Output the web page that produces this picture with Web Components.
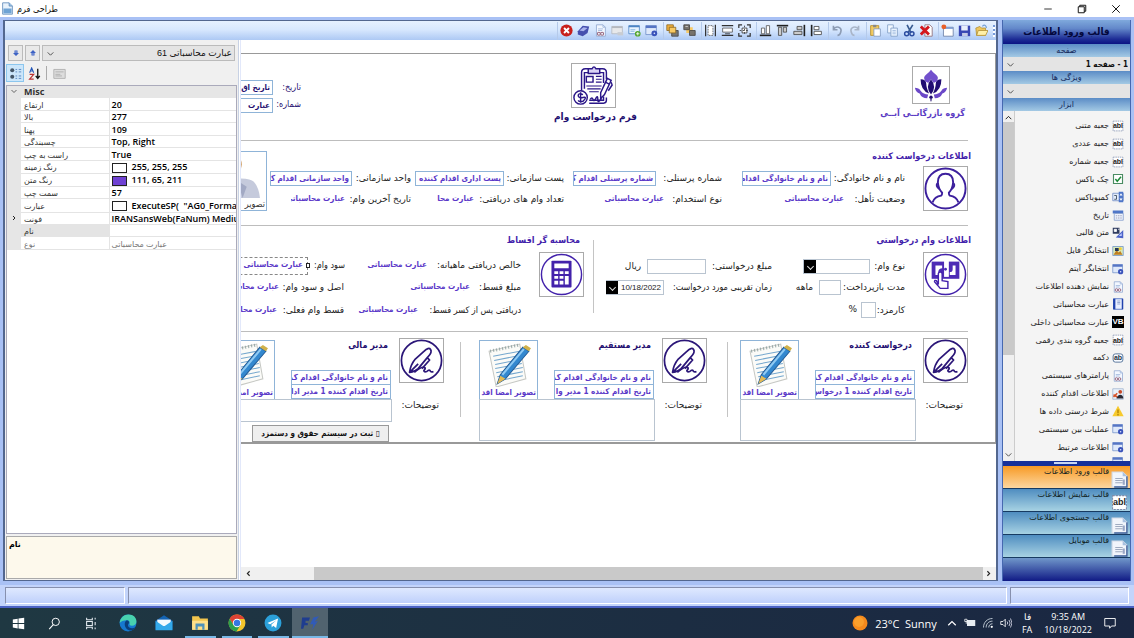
<!DOCTYPE html>
<html lang="fa">
<head>
<meta charset="utf-8">
<title>طراحی فرم</title>
<style>
html,body{height:100%;margin:0}
body{font-family:"Noto Sans","DejaVu Sans",sans-serif;font-size:9px;color:#111}
</style>
</head>
<body>
<designer-window></designer-window>
<script>
const ICONS = {
  doc: '<path d="M2 1h8l4 4v10H2z" fill="#e8f2fb" stroke="#5c88b8"/><path d="M10 1v4h4" fill="#9ec4e6" stroke="#5c88b8"/><path d="M3 8h10v6H3z" fill="#6ea3d4"/>',
  up: '<path d="M8 2l6 6h-3v5H5V8H2z" fill="#3d62c4"/><path d="M6 10h4" stroke="#fff"/>',
  down: '<path d="M8 14l6-6h-3V3H5v5H2z" fill="#3d62c4"/><path d="M6 6h4" stroke="#fff"/>',
  chevron: '<path d="M3 6l5 5 5-5" fill="none" stroke="#444" stroke-width="1.6"/>',
  chevronup: '<path d="M3 11l5-5 5 5" fill="none" stroke="currentColor" stroke-width="1.6"/>',
  left: '<path d="M10 4L6 8l4 4" fill="none" stroke="#222" stroke-width="2"/>',
  right: '<path d="M6 4l4 4-4 4" fill="none" stroke="#222" stroke-width="2"/>',
  cats: '<circle cx="4" cy="4" r="2.5" fill="#456"/><circle cx="4" cy="12" r="2.5" fill="#456"/><path d="M8 3h2m2 0h3M8 6h2m2 0h3M8 11h2m2 0h3M8 14h2m2 0h3" stroke="#4b78b5"/>',
  sort: '<path d="M2 7l2.500-6L7 7M3 5h3" fill="none" stroke="#2456b8" stroke-width="1.300"/><path d="M2 9h5l-5 6h5" fill="none" stroke="#b33" stroke-width="1.500"/><path d="M12 2v12M9.500 11l2.500 3 2.500-3" fill="none" stroke="#111" stroke-width="1.600"/>',
  page: '<path d="M1 3h14v11H1z" fill="#ddd" stroke="#aaa"/><path d="M3 6h10M3 9h6M3 11h8" stroke="#aaa"/>',
  close: '<circle cx="8" cy="8" r="7.500" fill="#c8201c"/><path d="M5 5l6 6m0-6l-6 6" stroke="#fff" stroke-width="2.400"/>',
  cube: '<path d="M1 9l6-7 8 1-2 8-6 4-6-2z" fill="#4650ae"/><path d="M3 8l5-4 5 1-5 4z" fill="#aab3ec"/>',
  docview: '<path d="M3 1h8l3 3v11H3z" fill="#f2f7ff" stroke="#8fa6cf"/><path d="M11 1v3h3M5 6h6M5 8h5" fill="none" stroke="#9cb4da"/><circle cx="6" cy="12" r="1.800" fill="none" stroke="#9a6a80" stroke-width="1.300"/><circle cx="10" cy="12" r="1.800" fill="none" stroke="#9a6a80" stroke-width="1.300"/>',
  greyform: '<path d="M1 3h13v9H1z" fill="#e7e8ea" stroke="#b4b8bf"/><path d="M1 4h13" stroke="#b4b8bf" stroke-width="2"/><path d="M8 10h7v4H8z" fill="#c8ccd2"/>',
  addform: '<path d="M1 2h13v10H1z" fill="#e9f4ff" stroke="#4c84c4"/><path d="M1 3h13" stroke="#4c84c4" stroke-width="2"/><path d="M3 7h6M3 9h5" stroke="#7eb0dd"/><circle cx="12" cy="12" r="3.500" fill="#55a630"/><path d="M12 10v4m-2-2h4" stroke="#fff"/>',
  form: '<path d="M1 2h13v11H1z" fill="#dfe9fa" stroke="#6f8fca"/><path d="M1 3.500h13" stroke="#5675c4" stroke-width="3"/><circle cx="11.500" cy="11.500" r="3.500" fill="#3a53ba"/><circle cx="11.500" cy="11.500" r="1" fill="#dfe6ff"/>',
  front: '<path d="M1 1h8v7H1z" fill="#f0b13b" stroke="#8c6821"/><path d="M7 8h8v7H7z" fill="#777" stroke="#444"/><path d="M4 4h8v7H4z" fill="#f7c964" stroke="#8c6821"/>',
  back: '<path d="M4 4h8v7H4z" fill="#f7c964"/><path d="M1 1h7v6H1zM8 8h7v6H8z" fill="#77736c" stroke="#444"/><path d="M3 3h3" stroke="#ddd"/>',
  sizeh: '<path d="M2 1v14M14 1v14" stroke="#333" stroke-width="1.500"/><path d="M5 2h6v12H5z" fill="#fff" stroke="#555" stroke-dasharray="2 1"/>',
  sizev: '<path d="M1 2h14M1 14h14" stroke="#333" stroke-width="1.500"/><path d="M2 5h12v5H2z" fill="#fff" stroke="#555"/><path d="M5 12h6" stroke="#333"/>',
  sizeb: '<path d="M1 5V1h4m6 0h4v4m0 6v4h-4m-6 0H1v-4" fill="none" stroke="#333" stroke-width="1.500"/><path d="M5 5h6v6H5z" fill="#fff" stroke="#333"/><path d="M8 2v12M2 8h12" stroke="#333" stroke-dasharray="2 2"/>',
  alignb: '<path d="M1 14h14" stroke="#222" stroke-width="2"/><path d="M3 5h4v7H3zM9 2h4v10H9z" fill="#fff" stroke="#555"/>',
  alignt: '<path d="M1 2h14" stroke="#222" stroke-width="2"/><path d="M3 4h4v10H3zM9 4h4v6H9z" fill="#ccc" stroke="#444"/>',
  alignr: '<path d="M14 1v14" stroke="#222" stroke-width="2"/><path d="M5 3h6v4H5zM1 9h10v4H1z" fill="#ccc" stroke="#444"/>',
  alignl: '<path d="M2 1v14" stroke="#222" stroke-width="2"/><path d="M5 3h6v4H5zM5 9h9v4H5z" fill="#fff" stroke="#444"/>',
  undo: '<path d="M3 2v5h5M3 7c3-6 11-3 9 3-.5 2-2 4-4 4" fill="none" stroke="#8d9cb4" stroke-width="2"/>',
  redo: '<path d="M13 2v5H8m5 0C10 1 2 4 4 10c.5 2 2 4 4 4" fill="none" stroke="#a9b5c8" stroke-width="2"/>',
  paste: '<path d="M2 2h10v12H2z" fill="#f3cb61" stroke="#b58d2b"/><path d="M5 1h4v3H5z" fill="#888"/><path d="M6 6h8v9H6z" fill="#fff" stroke="#7f97bf"/>',
  copy: '<path d="M2 1h7v10H2z" fill="#f2f8ff" stroke="#7f9cc4"/><path d="M6 5h8v10H6z" fill="#eaf4ff" stroke="#7f9cc4"/><path d="M8 8h4m-4 2h4m-4 2h4" stroke="#9cb7dc"/>',
  cut: '<path d="M12 1L6 11M5 1l5 10" stroke="#375a90" stroke-width="2"/><circle cx="4.500" cy="12" r="2.500" fill="none" stroke="#2b4ca0" stroke-width="1.800"/><circle cx="11" cy="12" r="2.500" fill="none" stroke="#2b4ca0" stroke-width="1.800"/>',
  remove: '<path d="M6 1h6l3 3v11H6z" fill="#fff" stroke="#8c6a74"/><path d="M1 3l10 10M11 3L1 13" stroke="#d4161c" stroke-width="3.500"/>',
  newform: '<path d="M3 4h12v11H3z" fill="#fff" stroke="#677ca5"/><path d="M3 5h12" stroke="#7b9bd0" stroke-width="2"/><circle cx="3.500" cy="3.500" r="3" fill="#e8602a"/>',
  save: '<path d="M1 2h14v13H1z" fill="#3846b2"/><path d="M4 2h8v6H4z" fill="#e8eefb"/><path d="M5 11h7v4H5z" fill="#c4cbe6"/>',
  open: '<path d="M1 5l5-2 2 2h5v9H2z" fill="#eec65c" stroke="#b29137"/><path d="M4 8h12l-3 6H2z" fill="#fff0a8" stroke="#b29137"/><path d="M9 3c3-3 5-1 5 2" fill="none" stroke="#74a0d6" stroke-width="1.500"/>',
  abl: '<path d="M1.500 1.500h13v13h-13z" fill="#fff" stroke="#7d8cab" stroke-dasharray="2 1"/>',
  check: '<path d="M2 2h12v12H2z" fill="#fff" stroke="#4a8c62" stroke-width="1.500"/><path d="M4.500 8l2.500 3 5-6" fill="none" stroke="#1f8a38" stroke-width="2"/>',
  combo: '<path d="M1 3h14v10H1z" fill="#e2ebfa" stroke="#6a86c0"/><path d="M9 1h6v14H9z" fill="#4f76c8"/><path d="M10 6l2-3 2 3zm0 4l2 3 2-3z" fill="#fff"/><path d="M3 6h3v5H3" fill="none" stroke="#234"/>',
  date: '<path d="M1 2h14v4H1z" fill="#4f76c8"/><path d="M3 6h12v9H3z" fill="#eef3fc" stroke="#7c95c8"/><path d="M5 9h8M5 12h8" stroke="#88a" stroke-dasharray="2 1"/>',
  template: '<path d="M1 1h9v8H1z" fill="#303c60"/><path d="M3 3h3v3H3zM8 3h2" fill="#fff" stroke="#fff"/><path d="M5 14L15 4v11z" fill="#4c63c8"/><path d="M9 12h4V8z" fill="#bac8ff"/>',
  picture: '<path d="M1 2h14v12H1z" fill="#d9e9b8" stroke="#6c90c7"/><path d="M2 13l4-6 3 3 2-2 3 5z" fill="#c07f21"/><path d="M4 4h5v4H4z" fill="#253858"/><circle cx="11" cy="5" r="2" fill="#f5cf32"/>',
  book: '<path d="M2 1h12v14H2z" fill="#eaf0ff" stroke="#2f55ba"/><path d="M3 1v14" stroke="#2143ad" stroke-width="3"/><path d="M14 1v14" stroke="#2143ad" stroke-width="2"/><path d="M7 4h4M7 6h4M7 8h4" stroke="#7d94c4"/>',
  vb: '<path d="M0 0h16v16H0z" fill="#000"/>',
  ab: '<rect x="1.500" y="2.500" width="13" height="11" rx="3" fill="#f8fbff" stroke="#4e6d94" stroke-width="1.200"/>',
  sign: '<path d="M1 1h14v14H1z" fill="#eaf2fb" stroke="#9db0ce"/><circle cx="11" cy="5" r="2.500" fill="#c84a28"/><path d="M6 14c1-6 9-7 9 0z" fill="#2a2a35"/><path d="M2 9l5 3M2 12l5-5" stroke="#d85228" stroke-width="2"/>',
  warn: '<path d="M8 1l7.500 14H.5z" fill="#f7ca2d"/><path d="M8 6v5m0 1v2" stroke="#a97a00" stroke-width="1.600"/>',
  sheet: '<path d="M1 1h10l4 4v10H1z" fill="#f1f5fb" stroke="#d2dae6"/><path d="M15 5v10H3" fill="none" stroke="#3d5f99" stroke-width="1.300"/><path d="M11 1v4h4" fill="#a7c0df"/><path d="M4 7h7M4 9h7M4 11h7" stroke="#9fabc0"/><path d="M11 8h2v5h-2z" fill="#98a6c4"/>',
  min: '<path d="M3 8h10" stroke="#222" stroke-width="1.200"/>',
  max: '<path d="M3 5h8v8H3zM5 5V3h8v8h-2" fill="none" stroke="#111" stroke-width="1.300"/>',
  x: '<path d="M3 3l10 10m0-10L3 13" stroke="#111" stroke-width="1.300"/>',
  win: '<path d="M1 3l6-1v5.500H1zM8 1.800L15 1v6.500H8zM1 8.500h6V14l-6-1zM8 8.500h7V15l-7-.9z" fill="#fff"/>',
  search: '<circle cx="9.500" cy="6" r="4.500" fill="none" stroke="#fff" stroke-width="1.200"/><path d="M6.500 9.500L1.500 15" stroke="#fff" stroke-width="1.300"/>',
  task: '<path d="M2 1v2.500h7V1M2 15v-2.500h7V15M2 5.500h7v5H2zM12.500 1v2m0 3v4m0 3v2" fill="none" stroke="#e4eaf0" stroke-width="1.300"/>',
  edge: '<circle cx="8" cy="8" r="7.500" fill="#1678cf"/><path d="M.6 8C1 3.500 4.500.5 8.500.5c4.500 0 7 3 7 6 0 2.500-1.500 4-4 4-2 0-2.500-1-2-2 .5-1.500-.5-3-2.500-3C4 5.500 1.500 6.500.6 8z" fill="#48d1ae"/><path d="M7 5.500C4 7 4.500 13 9 14.500c2 .6 4.500-.5 5.500-2.500-3 1.500-6 .5-6.500-1.500-.3-1.500 1-2 .9-3.200C8.700 6 8 5.600 7 5.500z" fill="#0a3f7c"/>',
  mail: '<path d="M.5 6L8 1l7.500 5v8H.5z" fill="#1464b4"/><path d="M2 5h12v6H2z" fill="#f3fafe"/><path d="M.5 6L8 11l7.500-5v8.500H.5z" fill="#33a9ea"/>',
  folder: '<path d="M1 2h6l1 2h7v10H1z" fill="#f4c64e"/><path d="M1 6h14v8H1z" fill="#ffe08a"/><path d="M4 8.500h8V14h-2v-3H6v3H4z" fill="#4f92ba"/>',
  chrome: '<circle cx="8" cy="8" r="7.500" fill="#f4c62c"/><path d="M8 .5A7.500 7.500 0 0 0 1.500 4.200L5 10l3-5.500h6.600A7.500 7.500 0 0 0 8 .5z" fill="#de4234"/><path d="M1.500 4.200A7.500 7.500 0 0 0 7.500 15.500L11 10H5z" fill="#2d9f4c"/><circle cx="8" cy="8" r="3.700" fill="#fff"/><circle cx="8" cy="8" r="2.900" fill="#3577e0"/>',
  telegram: '<circle cx="8" cy="8" r="7.500" fill="#2ba0da"/><path d="M3 8l9.500-4-1.700 8.500-2.600-2-1.300 1.400-.3-2.500L11 5.500 5.500 9z" fill="#fff"/>',
  app: '<path d="M1 3h7L7 6H4v2h2v2H3l-1 3H0z" fill="#1f3d8f"/><path d="M11 3l5-1-4 5 3-1-5 8 1-5H8z" fill="#315bb8"/>',
  sun: '<circle cx="8" cy="8" r="7.500" fill="#f58a1d"/><circle cx="7" cy="7" r="5" fill="#fa9f2c"/>',
  battery: '<path d="M4 4h11v8H4z" fill="#e7edf2"/><path d="M1 3h3v3H1zM3 6v3" fill="none" stroke="#fff"/>',
  wifi: '<path d="M2 14C2 7 7 2 14 2M5.500 14c0-5 3.500-8.500 8.500-8.500M9 14c0-3 2-5 5-5" fill="none" stroke="#c7d1db" stroke-width="1.200"/><circle cx="13" cy="13" r="1.500" fill="#fff"/>',
  sound: '<path d="M1 6h3l3-3v10l-3-3H1z" fill="none" stroke="#fff" stroke-width="1.100"/><path d="M9.500 6q1.500 2 0 4m2.500-6q3 4 0 8m2-10q4 6 0 12" fill="none" stroke="#dde" stroke-width="1.100"/>',
  note: '<path d="M1 2h14v10h-5l-2.500 3V12H1z" fill="none" stroke="#fff" stroke-width="1.200"/>',
  loanform: '<g fill="none" stroke="#2b1788" stroke-width="1.500"><path d="M17 5h-3q-4 0-4 4v19M29 5h3q4 0 4 4v7m0 19v3q0 3-3 3H18"/><path d="M17 9h-4v17m16-17h4v11m0 14v4H18"/><path d="M17 9V5h4q2-4 4 0h4v5H17z" fill="#d9d2f5"/><path d="M15 13h7v6h-7z"/><path d="M25 13h6m-6 3h6m-6 3h6M15 23h16M16 26h14M18 29h10" stroke-width="1.200"/><path d="M37 15l4 2-7 15-4 4v-6z" fill="#fff"/><path d="M35 19l4 2M41 19l1 3-4 6"/><path d="M19 37q2-3 3 0t3-1 2 1 4-1"/><circle cx="9" cy="35" r="7" fill="#fff"/></g><path d="M11.500 32q-5-2-5 1t5 2 0 4q-4 1-5-1M9 29.500v11" fill="none" stroke="#2b1788" stroke-width="1.500"/>',
  lotus: '<g transform="scale(1.184)"><path d="M19 3q2 3 5 5 4 3 1 7l-3 2-3-4-3 4-3-2q-3-4 1-7 3-2 5-5z" fill="#7250cd"/><path d="M19 13q6.500 8 0 16-6.500-8 0-16z" fill="#210d72"/><path d="M8 13q6 0 6 5 0 4 3 10-9-3-9-15zM30 13q-6 0-6 5 0 4-3 10 9-3 9-15z" fill="#210d72"/><path d="M2 22q4 0 6 3 3 4 8 4l-1 4q-6 0-8-5-4-1-5-6zM36 22q-4 0-6 3-3 4-8 4l1 4q6 0 8-5 4-1 5-6z" fill="#6b48c8"/><circle cx="19" cy="32" r="1.800" fill="#210d72"/><path d="M18 34h2l-1 3z" fill="#210d72"/></g>',
  person: '<g fill="none" stroke="#3c1f9d" stroke-width="2"><circle cx="22.500" cy="22.500" r="21"/><path d="M9 37q2-6 9-7 1-1 1-3-4-4-4.500-11 0-9 8-9t8 9q-.5 7-4.500 11 0 2 1 3 7 1 9 7"/><path d="M14 17q-2 3 2 6m15-6q2 3-2 6"/></g>',
  money: '<circle cx="22.500" cy="22.500" r="21" fill="none" stroke="#4322ab" stroke-width="1.600"/><path d="M8 9h29v18H8z" fill="#4d2bb5"/><path d="M12 13h7v3q-3 0-4 3v4h-3zM30 13h3v10h-6v-3q3 0 3-3z" fill="#fff"/><path d="M21 7h5v18h-5z" fill="#fff"/><circle cx="22.500" cy="17" r="1.500" fill="#4d2bb5"/><path d="M15 33V22q0-2 2-2t2 2v7l6 1v7h-8l-6-7q0-2 2-1z" fill="#fff" stroke="#4322ab" stroke-width="1.500"/>',
  calc: '<circle cx="22.500" cy="22.500" r="21" fill="none" stroke="#4322ab" stroke-width="1.500"/><rect x="12" y="8" width="21" height="28" rx="1" fill="#4322ab"/><path d="M15 11h15v5H15zM15 19h4v3h-4zm5.500 0h4v3h-4zm5.500 0h4v3h-4zM15 24h4v3h-4zm5.500 0h4v3h-4zm5.500 0h4v9h-4zM15 29h4v4h-4zm5.500 0h4v4h-4z" fill="#fff"/>',
  pen: '<g fill="none" stroke="#2b1678" stroke-width="1.800"><circle cx="22.500" cy="22.500" r="21"/><path d="M10 35q1-8 6-14l9-8q5-5 7-2t-3 8L19 31q-3 3-9 4zm0 0l9-9m9-7l3 3-8 9" stroke-linejoin="round"/><path d="M15 35q8-7 11-5 1 1-1 3 0 2 3 1 3-3 4 0 1 1 3 0"/></g>',
  notepad: '<path d="M3 10L33 3l6 34-29 8z" fill="#fbfbf8" stroke="#c6c8c4"/><path d="M4 10L32 4" stroke="#9aa" stroke-width="3" stroke-dasharray="1 2"/><path d="M7 15l26-5M8 19l26-5M9 23l25-5M9 27l26-5M10 31l26-5M11 35l25-5M12 39l24-5" stroke="#74a7ce"/><path d="M11 42l3-9L36 6l6 4-23 27z" fill="#3388cf" stroke="#225b96"/><path d="M16 33L37 8" stroke="#8fcaf3" stroke-width="2"/><path d="M11 42l3-8 5 3z" fill="#e4ba54"/><path d="M36 6l3-2 5 3-2 3z" fill="#d0b14a"/>',
  portrait: '<ellipse cx="17" cy="12" rx="9" ry="11" fill="#b97320"/><ellipse cx="15" cy="14" rx="7" ry="9" fill="#efc39a"/><path d="M2 45q1-18 14-19 18-1 22 3 5 6 6 16z" fill="#c5cadc"/><path d="M22 28l9 6-4 11" fill="#a2a9c4"/>'
};
const BIG = new Set(['loanform','lotus','person','money','calc','pen','notepad','portrait']);
const GLYPHS = {abl:['abl','7px','#222'], vb:['VB','8px','#fff'], ab:['ab','7px','#234']};

class UiIcon extends HTMLElement {
  connectedCallback() {
    if (this.shadowRoot) return;
    const n = this.getAttribute('name'), v = BIG.has(n) ? 45 : 16, g = GLYPHS[n];
    this.attachShadow({mode:'open'}).innerHTML = `<style>
      :host{display:inline-grid;width:var(--size,13px);height:var(--size,13px);flex:none}
      svg,b{grid-area:1/1}svg{width:100%;height:100%;display:block}
      b{place-self:center;font:700 8px/1 "Liberation Sans",sans-serif}</style>
      <svg viewBox="0 0 ${v} ${v}" aria-hidden="true">${ICONS[n]}</svg>${g ? `<b style="font-size:var(--glyph,${g[1]});color:${g[2]}">${g[0]}</b>` : ''}`;
  }
}
customElements.define('ui-icon', UiIcon);

function component(name, html) {
  const t = document.createElement('template');
  t.innerHTML = html;
  customElements.define(name, class extends HTMLElement {
    constructor() { super(); this.attachShadow({mode:'open'}).append(t.content.cloneNode(true)); }
  });
}

component('title-bar', `<style>
  :host{display:flex;align-items:center;height:17px;background:#fff;padding:0 12px 0 1px;gap:3px;font:9px/16px "DejaVu Sans Condensed","DejaVu Sans",sans-serif}
  h1{font:inherit;margin:0;flex:1}
  nav{display:flex;gap:22px}button{all:unset;display:flex;--size:12px}
</style><ui-icon name="doc"></ui-icon><h1>طراحی فرم</h1>
<nav><button aria-label="کوچک"><ui-icon name="min"></ui-icon></button><button aria-label="بزرگ"><ui-icon name="max"></ui-icon></button><button aria-label="بستن"><ui-icon name="x"></ui-icon></button></nav>`);

const groups = [['close','cube','docview','greyform','addform','form'],['front','back'],['sizeh','sizev','sizeb'],['alignb','alignt','alignr','alignl'],['undo','redo'],['paste','copy','cut','remove'],['newform','save','open']];
component('tool-strip', `<style>
  :host{display:flex;justify-content:flex-end;align-items:center;gap:3px;height:19px;background:linear-gradient(#e6f1ff,#d8e8fe 45%,#adc9f4)}
  div{display:flex;border-left:1px solid #b5caea}div:first-child{border:0}
  button{all:unset;display:grid;place-items:center;width:17px;height:18px}
  i{width:2px;height:12px;background:repeating-linear-gradient(#7699d8 0 2px,#fff 2px 4px);margin-right:1px}
</style>${groups.map(g => `<div>${g.map(i => `<button aria-label="${i}"><ui-icon name="${i}"></ui-icon></button>`).join('')}</div>`).join('')}<i></i>`);

component('drop-down', `<style>
  :host{display:grid;height:14px;background:#e4e4e4;direction:ltr}
  ::slotted(select){grid-area:1/1;appearance:none;border:0;background:none;width:100%;min-width:0;height:100%;padding:0 2px;margin:0;direction:rtl;font:inherit;color:#111}
  ui-icon{grid-area:1/1;--size:9px;align-self:center;margin-left:3px}
</style><ui-icon name="chevron"></ui-icon><slot></slot>`);

const rows = [['ارتفاع','20'],['بالا','277'],['پهنا','109'],['چسبندگی','Top, Right'],['راست به چپ','True'],['رنگ زمینه','255, 255, 255','#fff'],['رنگ متن','111, 65, 211','#6f41d3'],['سمت چپ','57'],['عبارت','ExecuteSP(&nbsp; "AG0_Format','#fff'],['فونت','IRANSansWeb(FaNum) Medium','','>'],['نام',''],['نوع','عبارت محاسباتی']];
component('property-panel', `<style>
  :host{display:flex;flex-direction:column;background:#f0f0f0;padding:5px 1px 1px 1px;box-sizing:border-box;gap:2px;border-right:1px solid #c8d2e4}
  .pick{display:flex;gap:2px;height:16px;padding:0 2px}
  button{all:unset;box-sizing:border-box;display:grid;place-items:center;width:15px;border:1px solid #bbb;background:#e9e9e9;--size:8px}
  drop-down{flex:1;height:16px;box-sizing:border-box;border:1px solid #bbb;font:9px "Liberation Sans","DejaVu Sans",sans-serif}
  .tools{display:flex;gap:3px;height:20px;align-items:center;padding-left:1px}
  .tools button{border:0;background:none;width:16px;height:16px;--size:13px}.tools .on{background:#cce6fa;outline:1px solid #8cc6ee}
  .tools i{width:1px;height:14px;background:#aaa;margin:0 1px}
  .grid{flex:1;background:#fff;border:1px solid #aab;overflow:hidden;min-height:0}
  table{border-collapse:collapse;table-layout:fixed;width:100%;height:164px}
  td,th{padding:0 0 0 3px;height:11px;line-height:11px;overflow:hidden;white-space:nowrap;text-align:left;border-bottom:1px solid #e4e4e4;vertical-align:middle;font-weight:400}
  th{font-size:8px;border-right:1px solid #e4e4e4;color:#333}td{font:600 9px/11px "Open Sans","DejaVu Sans",sans-serif;color:#000;padding-left:2px}
  td.g,.h td,.h th{background:#e6e6e6;border-color:#e6e6e6}.h th{font-size:9px;font-weight:700}
  td.g{padding:0;text-align:center;--size:8px}
  .sel th{background:#e4e4e4}.dim *{color:#777;font-weight:400;font-size:8px}
  span{display:inline-block;box-sizing:border-box;width:15px;height:10px;border:1px solid #222;vertical-align:middle;margin-right:5px}
  .help{height:41px;background:#fdf9ec;border:1px solid #aaa;font-size:8px;line-height:14px;font-weight:700;padding:0 2px;color:#000}
</style>
<div class="pick"><button aria-label="پایین"><ui-icon name="down"></ui-icon></button><button aria-label="بالا"><ui-icon name="up"></ui-icon></button><drop-down><select aria-label="کنترل"><option>عبارت محاسباتی 61</option></select></drop-down></div>
<div class="tools"><button class="on" aria-label="دسته"><ui-icon name="cats"></ui-icon></button><button aria-label="الفبا"><ui-icon name="sort"></ui-icon></button><i></i><button aria-label="صفحه"><ui-icon name="page"></ui-icon></button></div>
<div class="grid"><table><colgroup><col style="width:14px"><col style="width:88px"><col></colgroup>
<tr class="h"><td class="g"><ui-icon name="chevron"></ui-icon></td><th colspan="2">Misc</th></tr>
${rows.map((r,i) => `<tr class="${i==10?'sel':i==11?'dim':''}"><td class="g">${r[3]?'<ui-icon name="right"></ui-icon>':''}</td><th scope="row">${r[0]}</th><td>${r[2]?`<span style="background:${r[2]}"></span>`:''}${r[1]}</td></tr>`).join('')}
</table></div><div class="help">نام</div>`);

/* Every control on the design surface keeps its own place, anchored top-right:
   r = distance from the right edge, t = distance from the top. */
const at = (r,t,w,h) => `right:${r}px;top:${t}px;${w?`width:${w}px;`:''}${h?`height:${h}px;`:''}`;
const W = 995, T = 54;
const label = (x,y,s,c='') => `<span class="l ${c}" style="${at(W-x,y-T-8)}">${s}</span>`;
const field = (x1,x2,y,s,c='') => `<span class="f ${c}" style="${at(W-x2,y-T,x2-x1,15)}">${s}</span>`;
const pic = (x,y,n,s=45) => `<span class="p" style="${at(W-x-s,y-T)}--size:${s-2}px"><ui-icon name="${n}"></ui-icon></span>`;
const vline = (x,y,h) => `<i class="v" style="${at(W-x,y-T,1,h)}"></i>`;
const hline = y => `<i class="h" style="top:${y-T}px"></i>`;
const calc = 'عبارت محاسباتی';
const approve = (x,head,last,h) => label(x-11,345,head,'head navy') + pic(x,338,'pen') +
  `<figure style="${at(W-x+124,340-T,59,60)}"><ui-icon name="notepad"></ui-icon><figcaption>تصویر امضا اقد</figcaption></figure>` +
  field(x-108,x-8,370,'نام و نام خانوادگی اقدام ک') + field(x-108,x-8,384,'تاریخ اقدام کننده 1 '+last) +
  `<label class="l" for="n${x}" style="${at(W-x-40,397-T)}">توضیحات:</label><textarea id="n${x}" style="${at(W-x+7,399-T,176,h)}"></textarea>`;
component('form-surface', `<style>
  :host{display:block;position:relative;height:391px;box-sizing:border-box;border:solid #999;border-width:1px 1px 2px 0;background:#fff;direction:rtl;font:9px/16px "DejaVu Sans",sans-serif;color:#222;--narrow:"DejaVu Sans Condensed","DejaVu Sans",sans-serif}
  .l,.f,.p,.v,.h,figure,textarea,input,select,button,.arrow,.pick,.handle{position:absolute;box-sizing:border-box;margin:0}
  .l{white-space:nowrap}
  .n{font-family:var(--narrow)}
  .c,.f,figcaption{color:#5a38c8;font-weight:700;font-size:8px;font-family:var(--narrow)}
  .head,.logo{font-weight:700;color:#4322ab;font-size:9px;font-family:var(--narrow)}.logo{color:#5b3cc4}
  .title{font-size:10px;font-weight:700;font-family:var(--narrow)}.navy,.title{color:#1f0f70}
  .f{border:1px solid #8fb4d8;overflow:hidden;white-space:nowrap;line-height:13px;padding:0 2px}
  .clip{overflow:hidden}
  .p{border:1px solid #aaa;display:grid}
  .v{background:#c4c4c4}.h{height:1px;left:0;right:27px;background:#bdbdbd}
  figure{border:1px solid #8fb4d8;overflow:hidden;--size:46px;display:flex;flex-direction:column;align-items:center}
  figcaption{align-self:stretch;white-space:nowrap;line-height:12px;padding-right:1px}
  .plain figcaption{color:#333;font-weight:400;font-size:9px}
  textarea,input,select{appearance:none;border:1px solid #b9c4d0;background:#fff;resize:none;border-radius:0;padding:0;outline:0}
  input{direction:ltr;font:8px "Liberation Sans",sans-serif;color:#222;text-align:right;padding-right:2px}
  .arrow{background:#000;display:grid;place-items:center}.arrow::after{content:"";width:4px;height:4px;border:solid #ddd;border-width:0 1px 1px 0;transform:rotate(45deg)}
  .pick{border:1px dashed #888}.handle{border:1px solid #222;background:#fff}
  button{border:1px solid #999;background:#efefef;font:700 8px/14px var(--narrow);padding:0;white-space:nowrap;color:#111}
</style>
${pic(571,63,'loanform')}${label(637,117,'فرم درخواست وام','title')}
${pic(912,66,'lotus',38)}${label(965,113,'گروه بازرگانــی آبــی','logo')}
${label(301,87,'تاریخ:','navy n')}${label(301,104,'شماره:','navy n')}
${field(231,273,80,'تاریخ اق','navy')}${field(231,273,98,'عبارت','navy')}
${hline(140)}${hline(225)}${hline(331)}
${label(971,156,'اطلاعات درخواست کننده','head')}${pic(923,166,'person')}
${label(905,178,'نام و نام خانوادگی:')}${field(742,831,171,'نام و نام خانوادگی اقدام')}
${label(905,199,'وضعیت تأهل:')}${label(844,199,calc,'c')}
${label(722,178,'شماره پرسنلی:')}${field(573,656,171,'شماره پرسنلی اقدام ک')}
${label(722,199,'نوع استخدام:')}${label(664,199,calc,'c')}
${label(564,178,'پست سازمانی:')}${field(415,504,171,'پست اداری اقدام کننده')}
${label(564,199,'تعداد وام های دریافتی:')}${label(474,199,'عبارت محا','c')}
${label(411,178,'واحد سازمانی:')}${field(270,352,171,'واحد سازمانی اقدام ک')}
${label(411,199,'تاریخ آخرین وام:')}<span class="l c clip" style="${at(W-345,191-T,54,16)}">${calc}</span>
<figure class="plain" style="${at(W-267,151-T,58,60)}"><ui-icon name="portrait"></ui-icon><figcaption>تصویر</figcaption></figure>
${label(971,240,'اطلاعات وام درخواستی','head')}${pic(923,252,'money')}
<label class="l" for="kind" style="${at(W-905,258-T)}">نوع وام:</label><select id="kind" style="${at(W-870,259-T,67,15)}"></select><i class="arrow" style="${at(W-816,260-T,12,13)}"></i>
<label class="l" for="sum" style="${at(W-772,258-T)}">مبلغ درخواستی:</label><input id="sum" style="${at(W-706,259-T,59,15)}">${label(641,266,'ریال')}
<label class="l" for="term" style="${at(W-905,279-T)}">مدت بازپرداخت:</label><input id="term" style="${at(W-841,280-T,22,15)}">${label(813,287,'ماهه')}
<label class="l n" for="when" style="${at(W-772,279-T)}">زمان تقریبی مورد درخواست:</label><input id="when" value="10/18/2022" style="${at(W-664,280-T,58,15)}"><i class="arrow" style="${at(W-618,281-T,12,13)}"></i>
<label class="l" for="fee" style="${at(W-905,302-T)}">کارمزد:</label><input id="fee" style="${at(W-876,302-T,15,16)}">${label(857,309,'%')}
${vline(594,240,73)}
${label(580,240,'محاسبه گر اقساط','head')}${pic(539,252,'calc')}
${label(521,265,'خالص دریافتی ماهیانه:')}${label(427,265,calc,'c')}
${label(521,287,'مبلغ قسط:')}${label(470,287,calc,'c')}
${label(521,310,'دریافتی پس از کسر قسط:','n')}${label(418,310,calc,'c')}
${label(345,265,'سود وام:','n')}${label(303,265,calc,'c')}
<i class="pick" style="${at(W-308,257-T,109,18)}"></i><i class="handle" style="${at(W-310,263-T,4,5)}"></i>
${label(344,287,'اصل و سود وام:')}${label(279,287,calc,'c')}
${label(344,310,'قسط وام فعلی:')}${label(277,310,calc,'c')}
${approve(923,'درخواست کننده','درخواس',42)}${vline(728,342,75)}
${approve(662,'مدیر مستقیم','مدیر وا',42)}${vline(461,342,75)}
${approve(399,'مدیر مالی','مدیر ادا',23)}
<button style="${at(W-389,425-T,137,17)}">▯ ثبت در سیستم حقوق و دستمزد</button>`);

component('scroll-bar', `<style>
  :host{display:flex;align-items:center;height:13px;background:#f0f0f0;--size:9px;padding:0 3px}
  i{flex:1;height:100%;margin-left:61px;margin-right:1px;background:#c9c9c9}
  :host([vertical]){flex-direction:column;height:auto;width:12px;padding:2px 0;box-sizing:border-box}
  :host([vertical]) i{flex:0 1 233px;width:100%;margin:0 0 auto}
  .v{display:none}:host([vertical]) .v{display:block}:host([vertical]) .hz{display:none}
</style><ui-icon class="hz" name="left"></ui-icon><ui-icon class="v" name="chevronup"></ui-icon><i></i><ui-icon class="hz" name="right"></ui-icon><ui-icon class="v" name="chevron"></ui-icon>`);

const tools = [['abl','جعبه متنی'],['abl','جعبه عددی'],['abl','جعبه شماره'],['check','چک باکس'],['combo','کمبوباکس'],['date','تاریخ'],['template','متن قالبی'],['picture','انتخابگر فایل'],['form','انتخابگر آیتم'],['docview','نمایش دهنده اطلاعات'],['book','عبارت محاسباتی'],['vb','عبارت محاسباتی داخلی'],['abl','جعبه گروه بندی رقمی'],['ab','دکمه'],['docview','پارامترهای سیستمی'],['sign','اطلاعات اقدام کننده'],['warn','شرط درستی داده ها'],['form','عملیات بین سیستمی'],['form','اطلاعات مرتبط']];
const pages = [['sheet','قالب ورود اطلاعات'],['abl','قالب نمایش اطلاعات'],['sheet','قالب جستجوی اطلاعات'],['sheet','قالب موبایل']];
component('tool-box', `<style>
  :host{display:flex;flex-direction:column;direction:rtl;font:9px/13px "DejaVu Sans",sans-serif;box-sizing:border-box;border:1px solid #4668b0;border-width:0 1px;min-height:0}
  h2{margin:0;height:24px;font:700 10px/24px "DejaVu Sans Condensed","DejaVu Sans",sans-serif;text-align:center;color:#04083c;background:linear-gradient(#7fa9dc,#6388ca 35%,#1d2c95 80%,#0a1283)}
  h3{margin:0;height:13px;font:8px/13px "DejaVu Sans",sans-serif;text-align:center;color:#15295c;background:linear-gradient(#5b8cc6,#a3c9e4)}
  drop-down{font:700 8px "DejaVu Sans Condensed","DejaVu Sans",sans-serif}
  .list{display:flex;flex:1;min-height:0;background:#f4f4f4;direction:ltr}
  scroll-bar{border-right:1px solid #ccc}
  ul{direction:rtl;flex:1;min-width:0;margin:0;padding:6px 6px 0 0;list-style:none;display:flex;flex-direction:column;overflow:hidden}
  li{flex:1;min-height:0;display:flex;align-items:center;gap:3px;white-space:nowrap;font-size:8px;--size:12px;color:#222}
  li.cut{flex:0 0 5px;align-items:flex-start;overflow:hidden}
  hr{margin:0;border:0;height:5px;background:linear-gradient(90deg,#0000 40%,#c7d6f4 40% 58%,#0000 58%) 0 1px/100% 2px no-repeat,#16309a}
  a{display:flex;gap:2px;height:23px;box-sizing:border-box;border-bottom:1px solid #173b62;padding-right:2px;color:#122;text-decoration:none;background:linear-gradient(#4f8dc0,#a7d2e3);line-height:12px;font-size:8px}
  a.on{background:linear-gradient(#f79a25,#fdd7a0)}a ui-icon{--size:17px;--glyph:9px;align-self:flex-end}
  footer{height:23px;background:linear-gradient(#7097ca,#101a85)}
</style><h2>قالب ورود اطلاعات</h2><h3>صفحه</h3><drop-down><select aria-label="صفحه"><option>1 - صفحه 1</option></select></drop-down><h3>ویژگی ها</h3><drop-down><select aria-label="ویژگی ها"></select></drop-down><h3>ابزار</h3>
<div class="list"><scroll-bar vertical></scroll-bar><ul>${tools.map(t => `<li><ui-icon name="${t[0]}"></ui-icon><span>${t[1]}</span></li>`).join('')}<li class="cut"><ui-icon name="form"></ui-icon></li></ul></div>
<hr>${pages.map((p,i) => `<a href="#" class="${i?'':'on'}"><ui-icon name="${p[0]}"></ui-icon><span>${p[1]}</span></a>`).join('')}<footer></footer>`);

component('status-bar', `<style>
  :host{display:flex;gap:3px;height:17px;padding:2px 5px;margin:4px 0 0;background:#c3d4fb;border-bottom:2px solid #4b62c4}
  i{box-sizing:border-box;border:1px solid;border-color:#8790ae #fff #fff #8790ae;background:linear-gradient(#dfe9ff,#bfd0fb)}
  .a{flex:0 0 120px}.b{flex:1}.c{flex:0 0 119px}
</style><i class="a"></i><i class="b"></i><i class="c"></i>`);

const apps = ['win','search','task','edge','mail','folder','chrome','telegram','app'];
component('task-bar', `<style>
  :host{display:flex;justify-content:space-between;height:30px;background:linear-gradient(90deg,#1f3842,#1c2d42 60%,#1a2742);color:#fff;font:11px "Open Sans","Noto Sans",sans-serif}
  nav{display:grid;grid-template-columns:repeat(9,1fr);width:328px}
  button{all:unset;display:grid;place-items:center;--size:18px;position:relative}
  button:nth-child(-n+3){--size:13px}
  button.on::after{content:"";position:absolute;inset:auto 3px 0;height:2px;background:#79b8e6}
  button:last-child{background:#51636f}button:last-child.on::after{inset:auto 0 0}
  section{display:flex;align-items:center;padding-right:18px;--size:12px}
  ui-icon{flex:none}.tray{display:flex;gap:6px;margin-left:9px}
  p{margin:0;font-size:9px;line-height:13px;text-align:center}
  .lang{margin-left:10px}.clock{margin:0 12px 0 12px}
</style><nav>${apps.map((n,i) => `<button aria-label="${n}" class="${i>4?'on':''}"><ui-icon name="${n}"></ui-icon></button>`).join('')}</nav>
<section><ui-icon name="sun" style="--size:16px"></ui-icon><span style="margin-left:7px;white-space:pre">23°C  Sunny</span>
<div class="tray"><ui-icon name="chevronup"></ui-icon><ui-icon name="battery"></ui-icon><ui-icon name="wifi"></ui-icon><ui-icon name="sound"></ui-icon></div>
<p class="lang">فا<br>FA</p><p class="clock">9:35 AM<br>10/18/2022</p><ui-icon name="note"></ui-icon></section>`);

component('designer-window', `<style>
  :host{display:flex;flex-direction:column;height:100vh;min-height:500px;background:#a9c1f5}
  main{flex:1;min-height:0;display:flex;gap:4px;padding:3px 3px 0}
  .work{flex:1;min-width:0;display:flex;flex-direction:column;border:solid #53678f;border-width:1px 2px 1px 2px}
  .body{flex:1;min-height:0;display:flex;background:#fff}
  property-panel{flex:0 0 234px}
  .view{flex:1;min-width:0;display:flex;flex-direction:column;border-left:1px solid #e2e8fa;margin-left:1px}
  .canvas{flex:1;min-height:0;overflow:hidden;padding-top:13px}
  tool-box{flex:0 0 129px}
</style><title-bar></title-bar>
<main><div class="work"><tool-strip></tool-strip><div class="body"><property-panel></property-panel><div class="view"><div class="canvas"><form-surface></form-surface></div><scroll-bar></scroll-bar></div></div></div><tool-box></tool-box></main>
<status-bar></status-bar><task-bar></task-bar>`);
</script>
</body>
</html>
